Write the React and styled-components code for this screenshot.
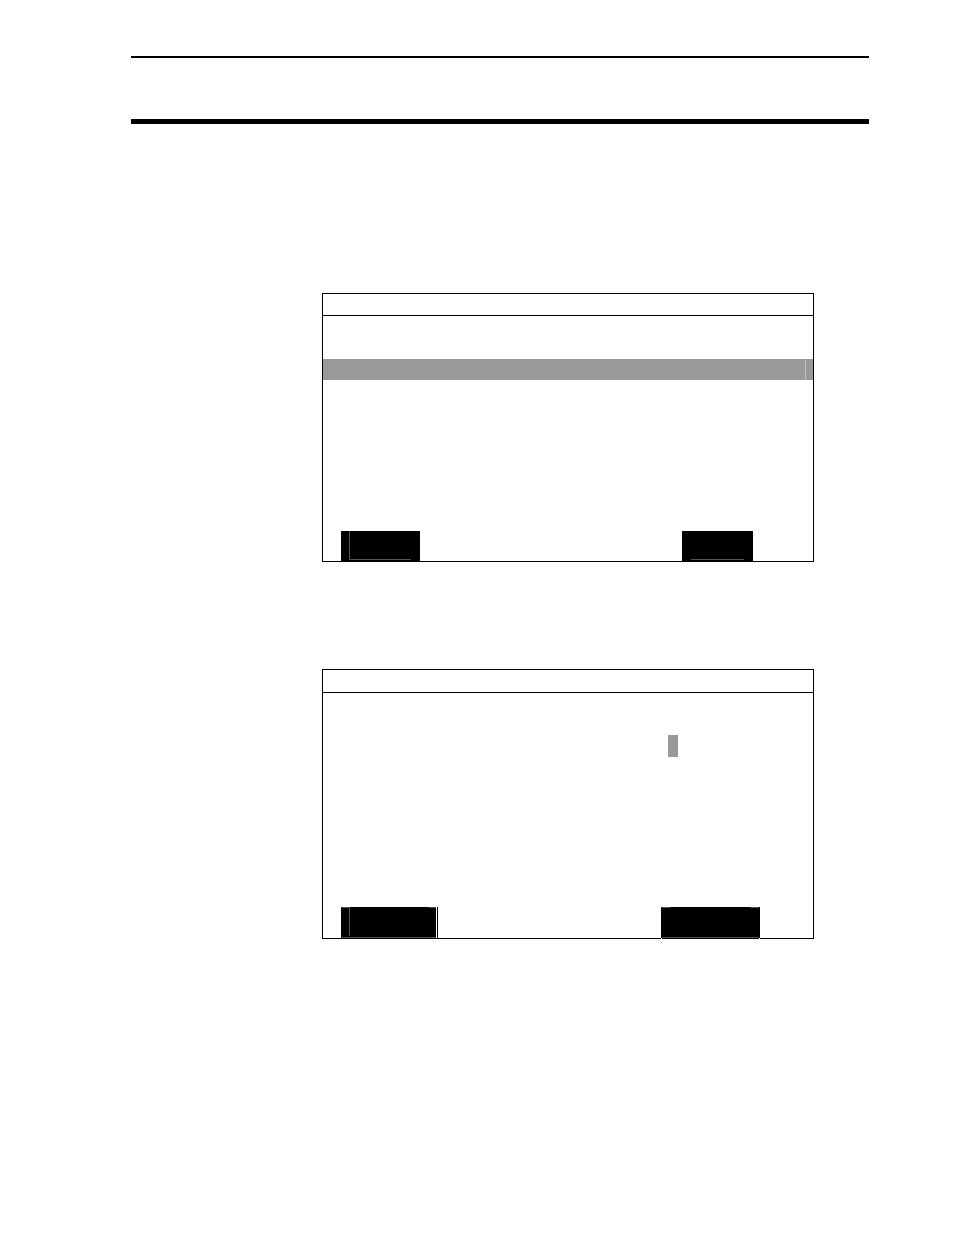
import styled, { createGlobalStyle } from 'styled-components';

export default function App() {
  return (
    <>
      <GlobalStyle />
      <Page>
        <PageHeader />
        <Screens>
          <Screen>
            <TitleBar $height={21} />
            <ScreenBody $top={43}>
              <SelectedRow />
            </ScreenBody>
            <KeyBar $end={60}>
              <SideKey type="button" aria-label="Left key" />
              <BaseKey type="button" aria-label="Right key" />
            </KeyBar>
          </Screen>
          <Screen>
            <TitleBar $height={22} />
            <ScreenBody $top={42}>
              <EntryField type="text" aria-label="Entry" />
            </ScreenBody>
            <KeyBar $end={53}>
              <KeyWithEdge>
                <FramedKey type="button" aria-label="Left key" $width={95} $side />
              </KeyWithEdge>
              <NotchedKey type="button" aria-label="Right key" $width={99} />
            </KeyBar>
          </Screen>
        </Screens>
      </Page>
    </>
  );
}

const GlobalStyle = createGlobalStyle`
  * {
    box-sizing: border-box;
  }
  body {
    margin: 0;
    background: #fff;
    font-family: "Liberation Sans", Arial, sans-serif;
  }
`;

const Page = styled.main`
  min-height: 100vh;
  padding: 56px 85px 0 131px;
`;

const PageHeader = styled.header`
  height: 68px;
  border-top: 2px solid #000;
  border-bottom: 5px solid #000;
`;

const Screens = styled.div`
  display: flex;
  flex-direction: column;
  gap: 107px;
  padding: 169px 55px 0 191px;
`;

const Screen = styled.section`
  display: flex;
  flex-direction: column;
  border: 1px solid #000;
`;

const TitleBar = styled.div`
  height: ${({ $height }) => $height + 1}px;
  border-bottom: 1px solid #000;
`;

const ScreenBody = styled.div`
  height: 215px;
  padding-top: ${({ $top }) => $top}px;
  ${({ $top }) => $top === 42 && 'height: 214px;'}
`;

const SelectedRow = styled.div`
  height: 21px;
  padding-right: 7px;
  background: #999;

  &::after {
    content: '';
    display: block;
    height: 100%;
    border-right: 1px solid #c0c0c0;
  }
`;

const EntryField = styled.input`
  display: block;
  width: 10px;
  height: 22px;
  margin: 0 135px 0 auto;
  padding: 0;
  border: 0;
  border-radius: 0;
  background: #999;
`;

const KeyBar = styled.div`
  display: flex;
  justify-content: space-between;
  padding: 0 ${({ $end }) => $end}px 0 18px;
`;

const Key = styled.button`
  display: block;
  height: 30px;
  padding: 0;
  border: 0;
  border-radius: 0;
  background-color: #000;
  background-repeat: no-repeat;
`;

const SideKey = styled(Key)`
  width: 79px;
  background-image: linear-gradient(#555, #555), linear-gradient(#555, #555);
  background-size: 1px 28px, 62px 1px;
  background-position: 8px 0, 8px 28px;
`;

const BaseKey = styled(Key)`
  width: 71px;
  background-image: linear-gradient(#555, #555);
  background-size: 53px 1px;
  background-position: 9px 28px;
`;

// grey strokes: top left, top right, base, and the inner side line
const FramedKey = styled(Key)`
  width: ${({ $width }) => $width}px;
  height: 31px;
  background-image: linear-gradient(#555, #555), linear-gradient(#555, #555),
    linear-gradient(#555, #555), linear-gradient(#555, #555);
  background-size: 8px 1px, 8px 1px, calc(100% - 2px) 1px,
    ${({ $side }) => ($side ? '1px 29px' : '0 0')};
  background-position: 1px 0, calc(100% - 1px) 0, 1px 30px, 8px 0;
  ${({ $side }) =>
    $side &&
    `
    background-size: 8px 1px, 7px 1px, calc(100% - 1px) 1px, 1px 29px;
    background-position: 1px 0, 100% 0, 1px 30px, 8px 0;
  `}
`;

const KeyWithEdge = styled.div`
  padding-right: 1px;
  border-right: 1px solid #000;
`;

// the screen's bottom line breaks for one pixel at both corners of this key
const NotchedKey = styled(FramedKey)`
  position: relative;

  &::after {
    content: '';
    position: absolute;
    top: 100%;
    left: 0;
    right: 0;
    height: 1px;
    border: solid #fff;
    border-width: 0 1px;
  }
`;
